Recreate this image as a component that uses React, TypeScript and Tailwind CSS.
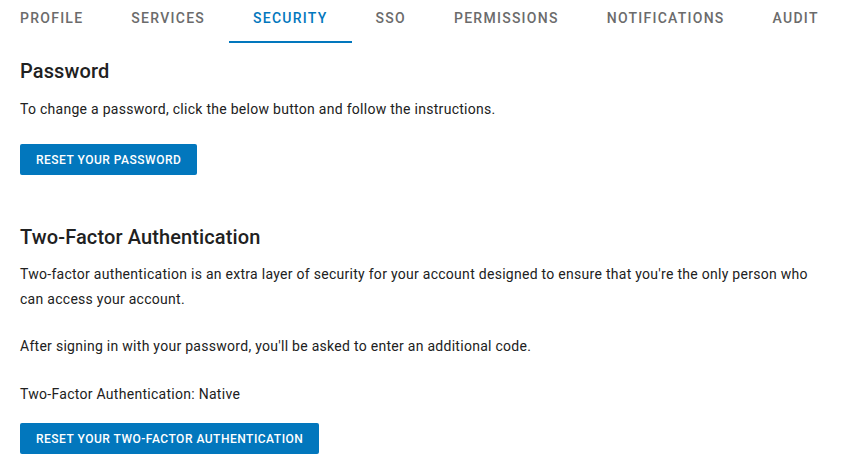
const tabs = ['Profile', 'Services', 'Security', 'SSO', 'Permissions', 'Notifications', 'Audit']

export default function App() {
  return (
    <div className="w-[848px] h-[468px] bg-white overflow-hidden text-[#212121]" style={{ fontFamily: 'Roboto, "Liberation Sans", sans-serif' }}>
      <div className="flex h-[43px] -ml-1">
        {tabs.map((t) => {
          const active = t === 'Security'
          return (
            <div
              key={t}
              className={
                active
                  ? 'relative flex items-center px-6 pb-[7px] text-sm font-medium uppercase tracking-[0.09em] text-[#0277bd]'
                  : 'relative flex items-center px-6 pb-[7px] text-sm font-medium uppercase tracking-[0.09em] text-[#6b6b6b]'
              }
            >
              {t}
              {active && <span className="absolute left-0 right-0 bottom-0 h-[2px] bg-[#0277bd]" />}
            </div>
          )
        })}
      </div>

      <div className="pl-5">
        <h2 className="mt-[14px] text-[20px] leading-[28px] font-medium tracking-[0.006em]">Password</h2>
        <p className="mt-[12px] text-sm leading-[25px] tracking-[0.02em]">To change a password, click the below button and follow the instructions.</p>
        <button className="mt-[22px] h-[31px] px-4 rounded-[2px] bg-[#0277bd] text-white text-xs font-medium uppercase tracking-[0.5px]">
          Reset your password
        </button>

        <h2 className="mt-[48px] text-[20px] leading-[28px] font-medium tracking-[0.006em]">Two-Factor Authentication</h2>
        <p className="mt-[11px] text-sm leading-[25px] tracking-[0.02em] w-[800px]">
          Two-factor authentication is an extra layer of security for your account designed to ensure that you're the only person who can access your account.
        </p>
        <p className="mt-[22px] text-sm leading-[25px] tracking-[0.02em]">After signing in with your password, you'll be asked to enter an additional code.</p>
        <p className="mt-[23px] text-sm leading-[25px] tracking-[0.02em]">Two-Factor Authentication: Native</p>
        <button className="mt-[16px] h-[31px] px-4 rounded-[2px] bg-[#0277bd] text-white text-xs font-medium uppercase tracking-[0.5px]">
          Reset your two-factor authentication
        </button>
      </div>
    </div>
  )
}
